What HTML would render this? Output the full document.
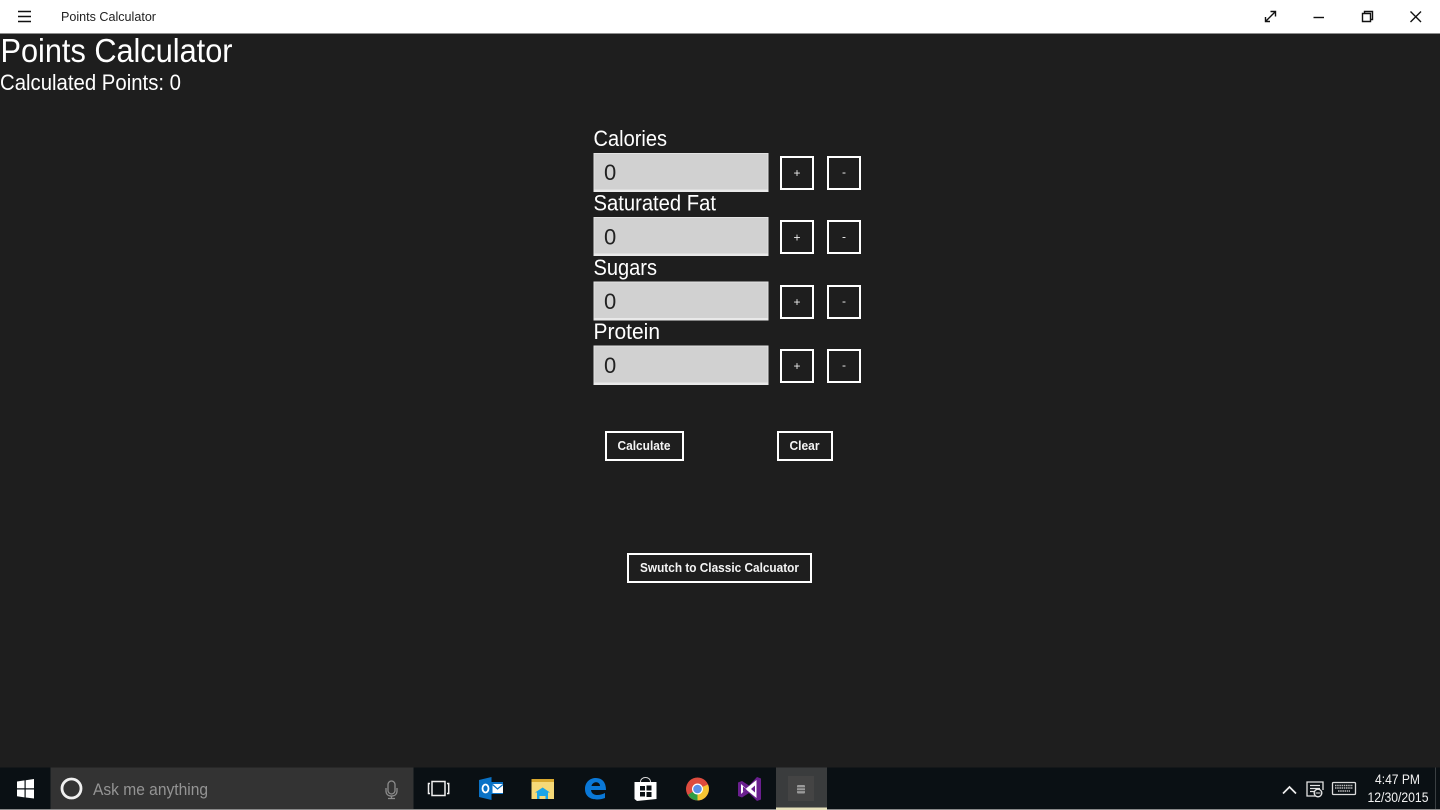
<!DOCTYPE html>
<html><head><meta charset="utf-8"><title>Points Calculator</title>
<style>html,body{margin:0;padding:0;background:#1e1e1e;width:1440px;height:810px;overflow:hidden}svg{display:block}text{font-family:"Liberation Sans",sans-serif}</style></head>
<body>
<svg width="1440" height="810" viewBox="0 0 1440 810" xmlns="http://www.w3.org/2000/svg">
<rect width="1440" height="810" fill="#1e1e1e"/>
<!-- title bar -->
<rect width="1440" height="33.500" fill="#fff"/>
<g stroke="#111" stroke-width="1.500"><path d="M18 11.500H31M18 16.500H31M18 21.500H31"/></g>
<text x="61" y="21" font-size="12.500" fill="#222" textLength="95" lengthAdjust="spacingAndGlyphs">Points Calculator</text>
<g fill="none" stroke="#111" stroke-width="1.400">
<path d="M1265.500 21.500L1275 12M1270.500 11.500H1275.500V16.500M1265.500 17V21.500H1270"/>
<path d="M1313.500 17.500H1324"/>
<path d="M1362.500 13.500H1370.500V21.500H1362.500ZM1364.500 13V11.500H1372.500V19.500H1371"/>
<path d="M1410.500 11.500L1421 22M1421 11.500L1410.500 22"/>
</g>
<!-- headings -->
<g fill="#fff">
<text x="0.500" y="62" font-size="33" textLength="232" lengthAdjust="spacingAndGlyphs">Points Calculator</text>
<text x="0" y="90" font-size="22" textLength="181" lengthAdjust="spacingAndGlyphs">Calculated Points: 0</text>
<text x="593.500" y="146" font-size="22" textLength="73.500" lengthAdjust="spacingAndGlyphs">Calories</text>
<text x="593.500" y="210.500" font-size="22" textLength="122.500" lengthAdjust="spacingAndGlyphs">Saturated Fat</text>
<text x="593.500" y="275" font-size="22" textLength="63.500" lengthAdjust="spacingAndGlyphs">Sugars</text>
<text x="593.500" y="339" font-size="22" textLength="66.500" lengthAdjust="spacingAndGlyphs">Protein</text>
</g>
<!-- inputs -->
<g fill="#d1d1d1" stroke="#e2e2e2" stroke-width="1">
<rect x="594" y="153.500" width="174" height="38"/>
<rect x="594" y="217.500" width="174" height="38"/>
<rect x="594" y="282" width="174" height="38"/>
<rect x="594" y="346" width="174" height="38"/>
</g>
<g fill="#e9e9e9">
<rect x="593.500" y="189.500" width="175" height="2.500"/><rect x="593.500" y="253.500" width="175" height="2.500"/><rect x="593.500" y="318" width="175" height="2.500"/><rect x="593.500" y="382.500" width="175" height="2.500"/>
</g>
<g fill="#222" font-size="22">
<text x="604" y="180">0</text><text x="604" y="244.500">0</text><text x="604" y="309">0</text><text x="604" y="373">0</text>
</g>
<!-- small buttons -->
<g fill="none" stroke="#fff" stroke-width="2">
<rect x="781" y="157" width="32" height="32"/><rect x="828" y="157" width="32" height="32"/>
<rect x="781" y="221" width="32" height="32"/><rect x="828" y="221" width="32" height="32"/>
<rect x="781" y="286" width="32" height="32"/><rect x="828" y="286" width="32" height="32"/>
<rect x="781" y="350" width="32" height="32"/><rect x="828" y="350" width="32" height="32"/>
<rect x="606" y="432" width="77" height="28"/>
<rect x="778" y="432" width="54" height="28"/>
<rect x="628" y="554" width="183" height="28"/>
</g>
<g fill="#eee" font-size="12" text-anchor="middle">
<text x="797" y="177">+</text><text x="844" y="176">-</text>
<text x="797" y="241.500">+</text><text x="844" y="240.500">-</text>
<text x="797" y="306">+</text><text x="844" y="305">-</text>
<text x="797" y="370">+</text><text x="844" y="369">-</text>
</g>
<g fill="#f4f4f4" font-size="13" font-weight="bold">
<text x="617.500" y="450" textLength="53" lengthAdjust="spacingAndGlyphs">Calculate</text>
<text x="789.500" y="450" textLength="30" lengthAdjust="spacingAndGlyphs">Clear</text>
<text x="640" y="572" textLength="159" lengthAdjust="spacingAndGlyphs">Swutch to Classic Calcuator</text>
</g>
<!-- taskbar -->
<rect y="767.500" width="1440" height="42.500" fill="#0a1014"/>
<rect y="809" width="1440" height="1" fill="#8a8a8a"/>
<rect x="50.500" y="767.500" width="363" height="41.500" fill="#333"/>
<path d="M17 781.500L24.500 780.400V788.300H17ZM25.700 780.200L34 779V788.300H25.700ZM17 789.500H24.500V797.400L17 796.300ZM25.700 789.500H34V798.500L25.700 797.500Z" fill="#fff"/>
<circle cx="71.500" cy="788.500" r="9.500" fill="none" stroke="#f0f0f0" stroke-width="2.800"/>
<text x="93" y="795" font-size="16.500" fill="#949494" textLength="115" lengthAdjust="spacingAndGlyphs">Ask me anything</text>
<g fill="none" stroke="#8c8c8c" stroke-width="1.300"><rect x="388" y="781" width="7" height="13" rx="3.500"/><path d="M386 788V791C386 794 388 796 391.500 796S397 794 397 791V788M391.500 796V798.500M388 798.500H395"/></g>
<!-- task view -->
<g fill="none" stroke="#f0f0f0" stroke-width="1.500"><rect x="432" y="781.500" width="13" height="14"/><path d="M430 783.500H428.500V793.500H430M447 783.500H448.700V793.500H447"/></g>
<!-- outlook -->
<path d="M479 780L491.500 777V800L479 797Z" fill="#0a72c6"/>
<rect x="491" y="782" width="12" height="12" fill="#0a72c6"/>
<path d="M492.500 784H503V793H492.500Z" fill="#fff"/>
<path d="M492.500 784.500L497.500 789L503 784.500" fill="none" stroke="#0a72c6" stroke-width="1.200"/>
<ellipse cx="485.500" cy="788.500" rx="3" ry="4" fill="none" stroke="#fff" stroke-width="1.800"/>
<!-- explorer -->
<path d="M531.500 779H543L545 781H554V799H531.500Z" fill="#f6d978"/>
<rect x="531.500" y="779" width="22.500" height="3" fill="#d9a92f"/>
<path d="M537 799V792.500H548V799H545.500V796H539.500V799Z" fill="#1aa5e8"/>
<path d="M535 792.500L542.700 787.500L550 792.500Z" fill="#1aa5e8"/>
<!-- edge -->
<path d="M585 789C585 782 590 778 596 778C602 778 606 782 606 790H591C591.500 795.500 598.500 796.500 605 793V798C597 801 585 800 585 789ZM591.500 786H600C600 781 592.500 781 591.500 786Z" fill="#0a78d7" fill-rule="evenodd"/>
<!-- store -->
<path d="M634.500 782H656.500V799L637 801L634.500 799Z" fill="#fff"/>
<path d="M640.500 782C640.500 776 650.500 776 650.500 782" fill="none" stroke="#ddd" stroke-width="1"/>
<g fill="#0a1014"><rect x="640" y="786" width="5" height="4.500"/><rect x="646.500" y="785.500" width="5" height="5"/><rect x="640" y="792" width="5" height="4.500"/><rect x="646.500" y="792" width="5" height="5"/></g>
<!-- chrome -->
<circle cx="697.500" cy="789" r="11.500" fill="#dd4b3e"/>
<path d="M697.500 789L688 794.800A11.500 11.500 0 0 0 697.500 800.500L703 789Z" fill="#2f9e46"/>
<path d="M697.500 789L708 784.500A11.500 11.500 0 0 1 697.500 800.500Z" fill="#f6c533"/>
<circle cx="697.500" cy="789" r="5.500" fill="#fff"/><circle cx="697.500" cy="789" r="4.300" fill="#5a8fe8"/>
<!-- VS -->
<path d="M738 782.500L742 781L749 785.500L757 777L761 778.500V799.500L757 801L749 793L742 797.500L738 796Z" fill="#6a1f8f"/>
<path d="M741 784L746 788.500L756.500 780V798L746 789.500L741 794Z" fill="#fff"/>
<path d="M743 786.500L746.500 789.200L743 792ZM751 789L755 785.500V792.500Z" fill="#6a1f8f"/>
<!-- active app -->
<rect x="776" y="767.500" width="51" height="41.500" fill="#3a3c3d"/>
<rect x="776" y="807.500" width="51" height="2.500" fill="#e7e2bd"/>
<rect x="788" y="776" width="26" height="25" fill="#444"/>
<rect x="797" y="785" width="8" height="8.500" rx="1" fill="#9a9a9a"/>
<path d="M797 787.800H805M797 790.700H805" stroke="#444" stroke-width="0.800"/>
<!-- tray -->
<path d="M1283 793.500L1289.500 787L1296 793.500" fill="none" stroke="#eee" stroke-width="1.700"/>
<path d="M1317 796H1307V782H1323V790" fill="none" stroke="#e4e4e4" stroke-width="1.300"/>
<path d="M1310 785.500H1320M1310 788.500H1320M1310 791.500H1315" stroke="#e4e4e4" stroke-width="1.200"/>
<circle cx="1318" cy="793" r="3.800" fill="#0a1014" stroke="#e4e4e4" stroke-width="1.400"/>
<path d="M1315.500 793H1320.500" stroke="#e4e4e4"/>
<rect x="1332.500" y="782.500" width="23" height="12" rx="1" fill="none" stroke="#ddd" stroke-width="1.300"/>
<path d="M1335 785.500H1353M1335 788H1353M1338 791H1350" stroke="#bbb" stroke-width="1.400" stroke-dasharray="1.500 .7"/>
<g fill="#f2f2f2" font-size="13.500" text-anchor="middle">
<text x="1397.500" y="784" textLength="45" lengthAdjust="spacingAndGlyphs">4:47 PM</text>
<text x="1398" y="802" textLength="61" lengthAdjust="spacingAndGlyphs">12/30/2015</text>
</g>
<rect x="1435" y="767.500" width="1" height="41.500" fill="#3a3f42"/>
</svg>
</body></html>
